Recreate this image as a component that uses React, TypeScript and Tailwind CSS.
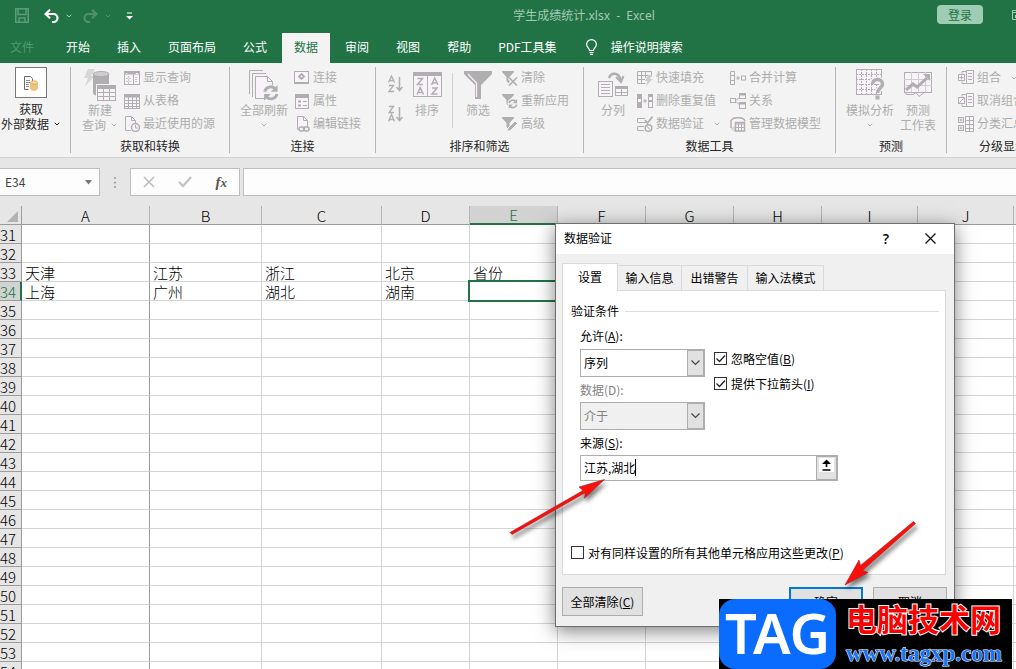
import React from "react";
import { ChevronDown } from "lucide-react";

const G = "#b1aeb1";
const L = "#f8f3f8";

function Svg({ w = 16, h = 16, children, className = "" }: { w?: number; h?: number; children: React.ReactNode; className?: string }) {
  return (
    <svg width={w} height={h} viewBox={`0 0 ${w} ${h}`} fill="none" stroke={G} className={`shrink-0 ${className}`} aria-hidden="true">
      {children}
    </svg>
  );
}

function Drop({ className = "" }: { className?: string }) {
  return <ChevronDown size={8} strokeWidth={3} className={`shrink-0 ${className}`} aria-hidden="true" />;
}

/* ---------- ribbon icons ---------- */

const IconExternal = () => (
  <Svg w={16} h={16}>
    <path d="M5.5 14.5h-4v-13h6l2 2v3" stroke="#6b6b6b" />
    <path d="M3 5.5h4M3 7.5h4M3 9.5h3M3 11.5h3" stroke="#8a8a8a" />
    <path d="M7.500 7.500v6c0 1 1.500 1.800 3.500 1.800s3.500-.8 3.500-1.800v-6" fill="#ecc27c" stroke="#ecc27c" />
    <ellipse cx="11" cy="7.500" rx="3.500" ry="1.600" fill="#f6dfb4" stroke="#e0ab55" />
  </Svg>
);
const IconNewQuery = () => (
  <Svg w={32} h={34}>
    <path d="M4 1h7L7 8h4L1 18l3-8H0z" fill="#d9d6d9" stroke="none" />
    <path d="M9 6v19c0 2 3 3 8 3s8-1 8-3V6z" fill={G} stroke="none" />
    <ellipse cx="17" cy="6" rx="8" ry="2.500" fill="#cfccd0" />
    <rect x="12" y="16" width="20" height="18" fill="#f3f3f3" stroke="none" />
    <rect x="13.5" y="17.500" width="18" height="15" fill={L} strokeWidth="1" />
    <path d="M13 19.500h19" strokeWidth="3" />
    <path d="M14 24.500h18M14 28.500h18M19.500 20v12M25.500 20v12" />
  </Svg>
);
const IconShowQuery = () => (
  <Svg>
    <rect x=".5" y="1.500" width="15" height="13" fill={L} />
    <path d="M0 3h16" strokeWidth="3" />
    <path d="M2 3.500h1M12 3.500h2" stroke={L} />
    <path d="M11 7.500h3M11 9.500h3M11 11.500h3M2 8.500h6M2 11.500h6M4.500 6v8" strokeDasharray="2 1" strokeOpacity=".7" />
    <path d="M9.500 4v10" />
  </Svg>
);
const IconTable = () => (
  <Svg>
    <rect x=".5" y="1.500" width="15" height="14" fill={L} />
    <path d="M0 3h16" strokeWidth="3" />
    <path d="M0 7.500h16M0 10.500h16M0 13.500h16M4.500 2v13M8.500 2v13M12.500 2v13" />
  </Svg>
);
const IconRecent = () => (
  <Svg>
    <path d="M7 14.500H1.500V.5h6l4 4v3" fill={L} />
    <path d="M7.500.5v4h4" />
    <circle cx="11.500" cy="11.500" r="4" fill={L} strokeWidth="1.500" />
    <path d="M11.500 9v3h2.500" />
  </Svg>
);
const Refresh = ({ x, y, s, w = 2 }: { x: number; y: number; s: number; w?: number }) => (
  <g transform={`translate(${x} ${y}) scale(${s})`} strokeWidth={w}>
    <path d="M1.500 6A5.500 5.500 0 0 1 11 3.500M12.500 8A5.500 5.500 0 0 1 3 10.500" />
    <path d="M13 0v6H7zM1 14V8h6z" fill={G} stroke="none" />
  </g>
);
const IconRefreshAll = () => (
  <Svg w={30} h={32}>
    <path d="M.5 25V1.500H14M3.500 28V4.500H17" />
    <path d="M6.500 29.500v-22h12l5 5v17z" fill={L} />
    <path d="M18.500 7.500v5h5" />
    <circle cx="22" cy="24" r="8" fill="#f3f3f3" stroke="none" />
    <Refresh x={14} y={16} s={1.12} w={2.6} />
  </Svg>
);
const IconConnect = () => (
  <Svg>
    <rect x=".5" y="1.500" width="14" height="11" fill={L} />
    <path d="M0 13h4M11 13h4" strokeWidth="2" />
    <path d="M7.500 4l2.500 2.500L7.500 9 5 6.500z" strokeWidth="1.800" />
    <path d="M4 13.500h7" strokeWidth="1" />
  </Svg>
);
const IconProps = () => (
  <Svg>
    <rect x="1.500" y="1.500" width="13" height="14" fill={L} />
    <path d="M1 3h14" strokeWidth="4" />
    <path d="M4 8.500h3M4 12.500h3" strokeWidth="2" />
    <path d="M9 8.500h4M9 12.500h4" />
  </Svg>
);
const IconEditLink = () => (
  <Svg>
    <path d="M4 13.500h-.5V.5h6l4 4v7" fill={L} />
    <path d="M9.500.5v4h4" />
    <rect x="5" y="11" width="5.500" height="4" rx="2" strokeWidth="1.500" />
    <rect x="9.500" y="11" width="5.500" height="4" rx="2" strokeWidth="1.500" />
  </Svg>
);
const IconAZ = ({ desc }: { desc?: boolean }) => (
  <Svg w={15} h={18}>
    <g strokeWidth="1.300">
      {desc ? <path d="M1 1.500h4.500L1 7.500h5M.500 16.500l3-7 3 7M1.500 14.500h4" /> : <path d="M.500 7.500l3-6.500 3 6.500M1.500 5.500h4M1 10.500h4.500L1 16.500h5" />}
    </g>
    <path d="M11.500 2v13M8.500 12l3 3.500 3-3.500" strokeWidth="1.500" />
  </Svg>
);
const IconSort = () => (
  <Svg w={29} h={26}>
    <rect x=".5" y=".5" width="28" height="24" fill={L} />
    <path d="M0 2h29" strokeWidth="4" />
    <path d="M14.500 4v20" />
    <g strokeWidth="1.500">
      <path d="M4.500 6.500h5l-5 6h5.500M4 22.500l3.200-7 3.300 7M5 20.500h4.500M18.500 13l3.200-7 3.300 7M19.500 11h4.500M19 16h5l-5 6h5.500" />
    </g>
  </Svg>
);
const IconFilter = () => (
  <Svg w={28} h={28}>
    <path d="M0 0h28v3L17 14v14h-6V14L0 3z" fill={G} stroke="none" />
    <path d="M4 3l8.500 9v14" stroke={L} strokeWidth="1.200" />
  </Svg>
);
const MiniFunnel = () => <path d="M0 1h12v1L7.500 7v7L4.500 11V7L0 2z" fill={G} stroke="none" />;
const IconClear = () => (
  <Svg>
    <MiniFunnel />
    <path d="M7 7.500l8 8M15 7.500l-8 8" stroke="#f3f3f3" strokeWidth="3.500" />
    <path d="M7 7.500l8 8M15 7.500l-8 8" strokeWidth="1.600" />
  </Svg>
);
const IconReapply = () => (
  <Svg>
    <MiniFunnel />
    <circle cx="11" cy="10.500" r="5.500" fill="#f3f3f3" stroke="none" />
    <Refresh x={6} y={6} s={0.7} w={2.4} />
  </Svg>
);
const IconAdvanced = () => (
  <Svg>
    <MiniFunnel />
    <path d="M5 15.500l1-3.500 7-7 2.500 2.500-7 7z" fill={G} stroke="#f3f3f3" />
  </Svg>
);
const IconColumns = () => (
  <Svg w={31} h={26}>
    <path d="M11 6c2-6 10-6 11.500 2" strokeWidth="2.500" />
    <path d="M18 5l5 5 2.500-6" strokeWidth="2" />
    <rect x=".5" y="9.500" width="14" height="15" fill={L} />
    <path d="M3 12.500h9M3 15.500h9M3 18.500h9M3 21.500h9" />
    <rect x="17.500" y="14.500" width="12" height="9" fill={L} />
    <path d="M17 15.500h13" strokeWidth="3" />
    <path d="M18 20.500h12M23.500 16v8" />
  </Svg>
);
const IconFlash = () => (
  <Svg>
    <path d="M.5 1.500h14v5M.5 1.500v12h8M1 5.500h13M1 9.500h7M4.500 2v11M8.500 2v6" />
    <path d="M11 5h4l-2 4h2.500L9 16l1.500-5H8z" fill="#cfcbcf" stroke="none" />
  </Svg>
);
const IconDup = () => (
  <Svg>
    <rect x="0" y="1" width="5" height="14" fill={G} stroke="none" />
    <path d="M1 7.500h3" stroke={L} strokeWidth="3" />
    <path d="M6 8h4M8 6v4" />
    <rect x="11.500" y="1.500" width="4" height="13" fill={L} />
    <path d="M11 3h5M11 8h5" strokeWidth="2" />
  </Svg>
);
const IconValid = () => (
  <Svg>
    <path d="M8 2.500H.5v4H9M7 10.500H.5v4H7" />
    <path d="M8 4l2.500 3L15.500.5" strokeWidth="1.800" />
    <circle cx="11.500" cy="12" r="3.300" strokeWidth="1.500" />
    <path d="M9.500 10l4 4" />
  </Svg>
);
const IconMerge = () => (
  <Svg>
    <path d="M.5 1.500h4v13h-4zM1 5.500h3M1 10.500h3" fill={L} />
    <path d="M6 8h4M8 6v4" />
    <rect x="11.500" y="6" width="4" height="4" fill={L} />
  </Svg>
);
const IconRelation = () => (
  <Svg>
    <path d="M5 8l5-4M5 8l5 4" />
    <rect x=".5" y="5.500" width="5" height="4" fill={L} />
    <rect x="9.500" y=".5" width="6" height="5" fill={L} />
    <rect x="9.500" y="9.500" width="6" height="6" fill={L} />
    <path d="M9 1.500h7M9 10.500h7" strokeWidth="2" />
  </Svg>
);
const IconModel = () => (
  <Svg>
    <path d="M1 13V4l3-3h8l3 3v9l-3 2.500H4z" fill="#d8d5d8" stroke="none" />
    <path d="M1 12V5C2 .5 14 .5 15 5M5.500 15V6.500h9V15z" fill={L} strokeWidth="1.500" />
    <path d="M5 8h10M5 11.500h10M8.500 7v8M11.500 7v8" />
  </Svg>
);
const IconWhatIf = () => (
  <Svg w={29} h={31}>
    <rect x=".5" y=".5" width="25" height="25" fill={L} />
    <path d="M0 5.500h26M0 10.500h26M0 15.500h26M0 20.500h26M5.500 0v26M10.500 0v26M15.500 0v26M20.500 0v26" strokeDasharray="2 1" />
    <path d="M16.500 15c0-6 10-6 10 0 0 4-5 4-5 9" stroke="#f3f3f3" strokeWidth="6" />
    <path d="M16.500 15c0-6 10-6 10 0 0 4-5 4-5 9" strokeWidth="3.500" />
    <rect x="19.500" y="26.500" width="4" height="4" fill={G} stroke="none" />
  </Svg>
);
const IconForecast = () => (
  <Svg w={29} h={27}>
    <rect x=".5" y="1.500" width="27" height="20" fill={L} />
    <path d="M0 8.500h28M0 14.500h28M7.500 1v20M14.500 1v20M21.500 1v20" stroke="#d0cdd0" />
    <path d="M2 19l7-6 4 3 10-9" strokeWidth="3" />
    <path d="M19 3h7v7z" fill={G} stroke="none" />
    <path d="M2 21.500v2h7l3-2 3 4 5-4" />
  </Svg>
);
const OutlineIcon = ({ kind }: { kind: "group" | "ungroup" | "subtotal" }) => (
  <Svg>
    {kind === "subtotal" ? (
      <>
        <rect x=".5" y="1.500" width="5" height="5" />
        <rect x=".5" y="9.500" width="5" height="5" />
        <path d="M1.500 4h3M3 2.500v3M1.500 12h3M3 10.500v3" />
        <path d="M7.500.5h8v15h-8zM7 4.500h9M7 8.500h9M7 12.500h9M11.500 0v16" fill={L} />
      </>
    ) : (
      <>
        <path d="M4 3.500V1.500h4M4 11.500v2h4" />
        <rect x=".5" y="4.500" width="6" height="6" fill={L} />
        {kind === "group" ? <path d="M1.500 7.500h4M3.500 5.500v4" /> : <path d="M1.500 9.500l4-4" />}
        <path d="M8.500.5h7v13h-7zM10 3.500h4M10 6.500h4M10 9.500h4" fill={L} />
      </>
    )}
  </Svg>
);

/* ---------- ribbon parts ---------- */

function Group({ label, className, labelClass = "text-center", children }: { label: string; className: string; labelClass?: string; children: React.ReactNode }) {
  return (
    <section className={`h-[86px] shrink-0 border-r border-[#b5b5b5] ${className}`}>
      <div className="flex h-[71px] items-start">{children}</div>
      <div className={`h-[15px] whitespace-nowrap leading-[15px] text-[#262626] ${labelClass}`}>{label}</div>
    </section>
  );
}

function Big({ icon, lines, drop, className = "w-12", solo }: { icon: React.ReactNode; lines: string[]; drop?: boolean; className?: string; solo?: boolean }) {
  return (
    <button type="button" className={`flex shrink-0 flex-col items-center whitespace-nowrap leading-[15px] ${className}`}>
      <span className="flex h-[35px] items-center justify-center">{icon}</span>
      {lines.map((l, i) => (
        <span key={l} className="flex h-[15px] items-center gap-1">
          {l}
          {drop && !solo && i === lines.length - 1 && <Drop />}
        </span>
      ))}
      {drop && solo && (
        <span className="flex h-[15px] items-center">
          <Drop />
        </span>
      )}
    </button>
  );
}

function Small({ icon, text, drop }: { icon: React.ReactNode; text: string; drop?: boolean }) {
  return (
    <button type="button" className="flex h-[21px] items-center gap-[3px] whitespace-nowrap leading-[19px]">
      {icon}
      <span className="pb-0.5">{text}</span>
      {drop && <Drop className="ml-1.5" />}
    </button>
  );
}

const Stack = ({ children, className = "" }: { children: React.ReactNode; className?: string }) => (
  <div className={`flex shrink-0 flex-col items-start gap-0.5 ${className}`}>{children}</div>
);

function Ribbon() {
  return (
    <div className="flex shrink-0 overflow-hidden border-b border-[#d0d0d0] bg-[#f3f3f3] py-1 text-[#adadad]">
      <Group label="" className="w-[71px]">
        <button type="button" className="flex w-[62px] flex-col items-center whitespace-nowrap leading-[15px] text-[#262626]">
          <span className="flex h-[31px] w-8 items-center justify-center border border-[#777] bg-white">
            <IconExternal />
          </span>
          <span className="pt-[3px]">获取</span>
          <span className="flex items-center gap-1">
            外部数据
            <Drop />
          </span>
        </button>
      </Group>
      <Group label="获取和转换" className="w-[159px]">
        <Big icon={<IconNewQuery />} lines={["新建", "查询"]} drop className="ml-[5px] w-12" />
        <Stack>
          <Small icon={<IconShowQuery />} text="显示查询" />
          <Small icon={<IconTable />} text="从表格" />
          <Small icon={<IconRecent />} text="最近使用的源" />
        </Stack>
      </Group>
      <Group label="连接" className="w-[146px]">
        <Big icon={<IconRefreshAll />} lines={["全部刷新"]} drop solo className="ml-2.5 w-12" />
        <Stack className="ml-1.5">
          <Small icon={<IconConnect />} text="连接" />
          <Small icon={<IconProps />} text="属性" />
          <Small icon={<IconEditLink />} text="编辑链接" />
        </Stack>
      </Group>
      <Group label="排序和筛选" className="w-[208px]">
        <div className="ml-3 flex flex-col gap-3 pt-2">
          <button type="button" aria-label="升序">
            <IconAZ />
          </button>
          <button type="button" aria-label="降序">
            <IconAZ desc />
          </button>
        </div>
        <Big icon={<IconSort />} lines={["排序"]} className="ml-1.5 w-9" />
        <div className="mx-[7px] mt-1.5 h-[55px] w-px bg-[#d0d0d0]" />
        <Big icon={<IconFilter />} lines={["筛选"]} className="w-9" />
        <Stack className="ml-1.5">
          <Small icon={<IconClear />} text="清除" />
          <Small icon={<IconReapply />} text="重新应用" />
          <Small icon={<IconAdvanced />} text="高级" />
        </Stack>
      </Group>
      <Group label="数据工具" className="w-[252px]">
        <Big icon={<IconColumns />} lines={["分列"]} className="ml-[11px] w-9" />
        <Stack className="ml-1.5 w-[93px]">
          <Small icon={<IconFlash />} text="快速填充" />
          <Small icon={<IconDup />} text="删除重复值" />
          <Small icon={<IconValid />} text="数据验证" drop />
        </Stack>
        <Stack>
          <Small icon={<IconMerge />} text="合并计算" />
          <Small icon={<IconRelation />} text="关系" />
          <Small icon={<IconModel />} text="管理数据模型" />
        </Stack>
      </Group>
      <Group label="预测" className="w-[111px]">
        <Big icon={<IconWhatIf />} lines={["模拟分析"]} drop solo className="ml-2.5 w-12" />
        <Big icon={<IconForecast />} lines={["预测", "工作表"]} className="ml-1.5 w-9" />
      </Group>
      <Group label="分级显示" className="w-[115px]" labelClass="pl-8">
        <Stack className="ml-[11px]">
          <Small icon={<OutlineIcon kind="group" />} text="组合" drop />
          <Small icon={<OutlineIcon kind="ungroup" />} text="取消组合" drop />
          <Small icon={<OutlineIcon kind="subtotal" />} text="分类汇总" />
        </Stack>
      </Group>
    </div>
  );
}

/* ---------- title and tabs ---------- */

const tabs = ["开始", "插入", "页面布局", "公式", "数据", "审阅", "视图", "帮助", "PDF工具集"];

function Header() {
  return (
    <header className="shrink-0 bg-[#217346] text-white">
      <div className="grid h-[33px] grid-cols-[1fr_auto_1fr] items-center">
        <div className="flex items-center pb-0.5 pl-[15px]">
          <button type="button" aria-label="保存">
            <svg width="14" height="15" viewBox="0 0 14 15" fill="none" stroke="#5e9b79" strokeWidth="1.500">
              <path d="M.75.75h12.500v13.500H.75zM3 1v5.500h8V1M4 14v-4h6v4" />
            </svg>
          </button>
          <button type="button" aria-label="撤消" className="ml-[15px] flex items-center gap-1.5">
            <svg width="15" height="14" viewBox="0 0 15 14" fill="none" stroke="#fff" strokeWidth="2.200">
              <path d="M6 0.800L1.500 5 6 9.200M2 5h7.500a4 4 0 0 1 0 8H8" />
            </svg>
            <Drop className="text-[#a8cdb8]" />
          </button>
          <button type="button" aria-label="恢复" className="ml-2.5 flex items-center gap-1.5">
            <svg width="15" height="14" viewBox="0 0 15 14" fill="none" stroke="#4f916c" strokeWidth="2.200">
              <path d="M9 .8L13.500 5 9 9.200M13 5H5.500a4 4 0 0 0 0 8H7" />
            </svg>
            <Drop className="text-[#4f916c]" />
          </button>
          <button type="button" aria-label="自定义快速访问工具栏" className="ml-3.5">
            <svg width="7" height="8" viewBox="0 0 7 8">
              <path d="M1 1h5" stroke="#fff" />
              <path d="M0 4h7L3.500 7.500z" fill="#fff" />
            </svg>
          </button>
        </div>
        <div className="whitespace-pre pb-0.5 pl-[152px] font-['Noto_Sans','Noto_Sans_CJK_SC',sans-serif] text-[#a3cab4]">学生成绩统计.xlsx  -  Excel</div>
        <div className="flex items-center justify-end pb-1">
          <button type="button" className="h-[19px] w-[46px] rounded-sm bg-[#9fcdb3] leading-[18px] text-[#217346]">
            登录
          </button>
          <svg width="4" height="10" viewBox="0 0 4 10" className="ml-[29px]" fill="none" stroke="#a3cab4">
            <path d="M4 .5H.5v9H4M1 2.500h3M3.500 5v3" />
          </svg>
        </div>
      </div>
      <nav className="flex h-[30px] items-stretch gap-[3px] whitespace-nowrap">
        <button type="button" className="mr-[17px] pb-[3px] pl-2.5 text-[#4f9a72]">
          文件
        </button>
        {tabs.map((t) => (
          <button key={t} type="button" className={`px-3 pb-[3px] ${t === "数据" ? "bg-[#f3f3f3] text-[#217346]" : ""}`}>
            {t}
          </button>
        ))}
        <button type="button" className="ml-3.5 flex items-center gap-3.5 pb-[3px]">
          <svg width="11" height="16" viewBox="0 0 11 16" fill="none" stroke="#fff" strokeWidth="1.200">
            <path d="M3.500 11.500c0-2.500-2.900-3-2.900-6.200a4.900 4.700 0 0 1 9.800 0c0 3.200-2.900 3.700-2.900 6.200zM3.500 13.500h4M4 15.400h3" />
          </svg>
          操作说明搜索
        </button>
      </nav>
    </header>
  );
}

function FormulaBar() {
  return (
    <div className="flex h-12 shrink-0 items-start bg-[#e6e6e6] pt-2.5">
      <div className="flex h-7 w-[100px] items-center border border-l-0 border-[#bfbfbf] bg-[#fdfdfd] pl-[5px] pr-1.5">
        <input aria-label="名称框" defaultValue="E34" className="w-full min-w-0 bg-transparent text-[#444] outline-none" />
        <svg width="9" height="5" viewBox="0 0 9 5" className="shrink-0">
          <path d="M1 0h7L4.500 4.500z" fill="#777" />
        </svg>
      </div>
      <svg width="2" height="28" viewBox="0 0 2 28" className="ml-3.5 mr-3.5">
        <path d="M0 10h2M0 14.500h2M0 19h2" stroke="#999" strokeWidth="1.500" />
      </svg>
      <div className="flex h-7 w-[110px] items-center justify-between border border-[#bfbfbf] bg-[#fdfdfd] px-3">
        <button type="button" aria-label="取消">
          <svg width="12" height="12" viewBox="0 0 12 12" stroke="#bdbdbd" strokeWidth="1.600">
            <path d="M1 1l10 10M11 1L1 11" />
          </svg>
        </button>
        <button type="button" aria-label="输入">
          <svg width="14" height="12" viewBox="0 0 14 12" fill="none" stroke="#c4c4c4" strokeWidth="2.400">
            <path d="M1 6l4 4L13 1" />
          </svg>
        </button>
        <button type="button" aria-label="插入函数" className="font-['Liberation_Serif',serif] text-[15px] font-bold italic leading-none text-[#555]">
          f<span className="text-[13px]">x</span>
        </button>
      </div>
      <input aria-label="编辑栏" className="ml-[3px] h-7 min-w-0 flex-1 border border-r-0 border-[#bfbfbf] bg-[#fdfdfd] px-2 outline-none" />
    </div>
  );
}

/* ---------- sheet ---------- */

const columns = ["A", "B", "C", "D", "E", "F", "G", "H", "I", "J", "K"];
const rows = Array.from({ length: 24 }, (_, i) => 31 + i);
const cells: Record<string, string> = {
  A33: "天津", B33: "江苏", C33: "浙江", D33: "北京", E33: "省份",
  A34: "上海", B34: "广州", C34: "湖北", D34: "湖南",
};

function Sheet() {
  return (
    <div className="min-h-0 flex-1 overflow-hidden bg-white">
      <table className="w-[1110px] table-fixed border-separate border-spacing-0 text-[15px] font-light leading-[17px]">
        <colgroup>
          <col className="w-[22px]" />
          <col className="w-32" />
          <col className="w-28" />
          <col className="w-[120px]" />
          <col className="w-[88px]" />
          <col className="w-[88px]" />
          <col className="w-[88px]" />
          <col className="w-[88px]" />
          <col className="w-[88px]" />
          <col className="w-24" />
          <col className="w-24" />
          <col className="w-24" />
        </colgroup>
        <thead>
          <tr className="h-[19px]">
            <th className="border-b border-r border-[#9b9b9b] bg-[#e6e6e6] p-0">
              <svg width="12" height="12" viewBox="0 0 12 12" className="ml-[7px] mt-1">
                <path d="M11 0v11H0z" fill="#b2b2b2" />
              </svg>
            </th>
            {columns.map((c) => (
              <th
                key={c}
                scope="col"
                className={`h-[19px] border-r p-0 pt-px font-light leading-[16px] ${
                  c === "E" ? "border-b-2 border-b-[#217346] border-r-[#b5b5b5] bg-[#d2d2d2] text-[#217346]" : "border-b border-b-[#9b9b9b] border-r-[#b5b5b5] bg-[#e6e6e6] text-black"
                }`}
              >
                {c}
              </th>
            ))}
          </tr>
        </thead>
        <tbody>
          {rows.map((r) => (
            <tr key={r} className="h-[19px]">
              <th
                scope="row"
                className={`h-[19px] border-b border-b-[#9b9b9b] p-0 pt-px font-light ${
                  r === 34 ? "border-r-2 border-r-[#217346] bg-[#d2d2d2] text-[#217346]" : "border-r border-r-[#9b9b9b] bg-[#e6e6e6] text-black"
                }`}
              >
                <span className={`flex justify-end ${r === 34 ? "pr-1" : "pr-[5px]"}`}>{r}</span>
              </th>
              {columns.map((c) => (
                <td
                  key={c}
                  className={`h-[19px] whitespace-nowrap border-b border-r border-b-[#d4d4d4] pb-0 pl-[3px] pr-0 pt-px text-black ${
                    c === "A" ? "border-r-[#9b9b9b]" : "border-r-[#d4d4d4]"
                  } ${c === "E" && r === 34 ? "relative" : ""}`}
                >
                  {cells[c + r]}
                  {c === "E" && r === 34 && <span className="absolute -bottom-0.5 -left-0.5 -right-0.5 -top-0.5 border-2 border-[#217346]" />}
                </td>
              ))}
            </tr>
          ))}
        </tbody>
      </table>
    </div>
  );
}

/* ---------- data validation dialog ---------- */

function Check({ id, checked, children }: { id: string; checked?: boolean; children: React.ReactNode }) {
  return (
    <label htmlFor={id} className="flex h-[25px] items-center gap-1 whitespace-nowrap">
      <span className="relative flex">
        <input id={id} type="checkbox" defaultChecked={checked} className="peer size-[13px] appearance-none border border-[#333] bg-white" />
        <svg width="13" height="13" viewBox="0 0 13 13" fill="none" stroke="#222" strokeWidth="1.300" className="pointer-events-none absolute inset-0 hidden peer-checked:block">
          <path d="M2.500 6.500l3 3 5.500-6" />
        </svg>
      </span>
      <span>{children}</span>
    </label>
  );
}

function Combo({ id, value, disabled }: { id: string; value: string; disabled?: boolean }) {
  return (
    <div className="relative w-[125px]">
      <select
        id={id}
        disabled={disabled}
        defaultValue={value}
        className={`block h-7 w-full appearance-none border border-[#adadad] px-[3px] opacity-100 outline-none ${disabled ? "bg-[#f0f0f0] text-[#838383]" : "bg-white text-black"}`}
      >
        <option>{value}</option>
      </select>
      <span className="pointer-events-none absolute inset-y-0 right-0 flex w-[18px] items-center justify-center border-2 border-l border-[#adadad] bg-[#e1e1e1]">
        <svg width="9" height="6" viewBox="0 0 9 6" fill="none" stroke="#444" strokeWidth="1.200">
          <path d="M.5.5l4 4 4-4" />
        </svg>
      </span>
    </div>
  );
}

function Dialog() {
  const plain = "h-[29px] border border-[#adadad] bg-[#e1e1e1]";
  return (
    <div
      role="dialog"
      aria-label="数据验证"
      className="absolute left-[555px] top-[223px] w-[400px] border border-[#6e6e6e] bg-[#f0f0f0] text-black shadow-[0_4px_18px_rgba(0,0,0,0.5)]"
    >
      <div className="flex h-[30px] items-center bg-white pb-0.5 pl-2 pr-[18px]">
        <h2 className="flex-1">数据验证</h2>
        <button type="button" aria-label="帮助" className="mr-9 font-['Open_Sans',sans-serif] text-[14px] font-semibold">
          ?
        </button>
        <button type="button" aria-label="关闭">
          <svg width="11" height="11" viewBox="0 0 11 11" stroke="#111" strokeWidth="1.300">
            <path d="M.5.5l10 10M10.500.5l-10 10" />
          </svg>
        </button>
      </div>
      <div className="px-1.5 pb-2.5 pt-[9px]">
        <div role="tablist" className="flex h-[27px] items-end">
          <button role="tab" aria-selected="true" type="button" className="relative -mb-px h-7 w-14 shrink-0 self-start border border-b-0 border-[#d9d9d9] bg-white pb-0.5">
            设置
          </button>
          <button role="tab" type="button" className="h-[25px] w-16 border-r border-t border-[#d9d9d9]">输入信息</button>
          <button role="tab" type="button" className="h-[25px] w-[66px] border-r border-t border-[#d9d9d9]">出错警告</button>
          <button role="tab" type="button" className="h-[25px] w-[76px] border-r border-t border-[#d9d9d9]">输入法模式</button>
        </div>
        <div className="mr-0.5 border border-[#d9d9d9] bg-white pb-[9px] pl-2 pr-1.5 pt-[11px]">
          <div className="flex h-[18px] items-center gap-1.5">
            <span>验证条件</span>
            <span className="h-px flex-1 bg-[#dcdcdc]" />
          </div>
          <div className="pl-[9px] pt-1.5">
            <div className="flex gap-[9px]">
              <div>
                <label htmlFor="allow" className="flex h-[23px] items-center pb-1">允许(<u>A</u>):</label>
                <Combo id="allow" value="序列" />
                <label htmlFor="data" className="flex h-[25px] items-center text-[#838383]">数据(D):</label>
                <Combo id="data" value="介于" disabled />
              </div>
              <div className="pt-5">
                <Check id="blank" checked>忽略空值(<u>B</u>)</Check>
                <Check id="arrow" checked>提供下拉箭头(<u>I</u>)</Check>
              </div>
            </div>
            <label htmlFor="source" className="flex h-[25px] items-center">来源(<u>S</u>):</label>
            <div className="relative flex h-[26px] w-[258px]">
              <input id="source" defaultValue="江苏,湖北" className="min-w-0 flex-1 border border-r-0 border-[#adadad] bg-white px-[3px] outline-none" />
              <span className="absolute left-[55px] top-1 h-[17px] w-px bg-black" />
              <button type="button" aria-label="折叠对话框" className="flex w-[22px] justify-center border-2 border-l border-[#adadad] bg-[#e1e1e1] pt-px">
                <svg width="15" height="14" viewBox="0 0 15 14">
                  <path d="M0 0h15v14H0z" fill="#fff" />
                  <path d="M7.500 9V3M3.500 12h8" stroke="#000" strokeWidth="1.600" />
                  <path d="M3 6l4.500-4.500L12 6z" fill="#000" />
                </svg>
              </button>
            </div>
          </div>
          <div className="pt-[59px]">
            <Check id="apply">对有同样设置的所有其他单元格应用这些更改(<u>P</u>)</Check>
          </div>
        </div>
        <div className="flex gap-2.5 pr-px pt-3">
          <button type="button" className={`${plain} mr-auto w-[81px]`}>全部清除(<u>C</u>)</button>
          <button type="button" className="h-[29px] w-[74px] border-2 border-[#0078d7] bg-[#e1e1e1]">确定</button>
          <button type="button" className={`${plain} w-[74px]`}>取消</button>
        </div>
      </div>
    </div>
  );
}

function Arrows() {
  return (
    <svg width="420" height="120" viewBox="0 0 420 120" className="pointer-events-none absolute left-[505px] top-[475px] drop-shadow-[2px_4px_2px_rgba(0,0,0,0.5)]" aria-hidden="true">
      <g fill="#fb0f0c" stroke="#a32020" strokeWidth=".6" strokeLinejoin="round">
        <path d="M5 57.500L78 15.500 74 12l25.500-7.500L79.500 23l1-5.500L7 59.500z" />
        <path d="M408.500 46.500L355.500 90.500 354 85l-14 25 23-12.500-5.500-2L410.500 48.500z" />
      </g>
    </svg>
  );
}

function Watermark() {
  return (
    <div className="absolute left-[719px] top-[599px] flex h-[70px] w-[293px] items-center bg-black">
      <div className="flex h-[70px] w-[117px] items-center justify-center rounded-2xl bg-[#0a6cff] pb-1 font-['Noto_Sans',sans-serif] text-[56px] font-semibold leading-none text-white">
        TAG
      </div>
      <div className="flex-1 whitespace-nowrap pl-2.5">
        <div className="pb-1 text-[31px] font-bold leading-[36px] text-[#fb0000] [paint-order:stroke] [-webkit-text-stroke:2px_#fff]">电脑技术网</div>
        <div className="font-['Liberation_Serif',serif] text-[23px] font-bold leading-[28px] text-[#1b74f0] [paint-order:stroke] [-webkit-text-stroke:1px_#fff]">www.tagxp.com</div>
      </div>
    </div>
  );
}

export default function App() {
  return (
    <div className="relative flex h-screen flex-col overflow-hidden bg-white font-['Noto_Sans_CJK_SC',sans-serif] text-[12px]">
      <Header />
      <Ribbon />
      <FormulaBar />
      <Sheet />
      <Dialog />
      <Arrows />
      <Watermark />
    </div>
  );
}
